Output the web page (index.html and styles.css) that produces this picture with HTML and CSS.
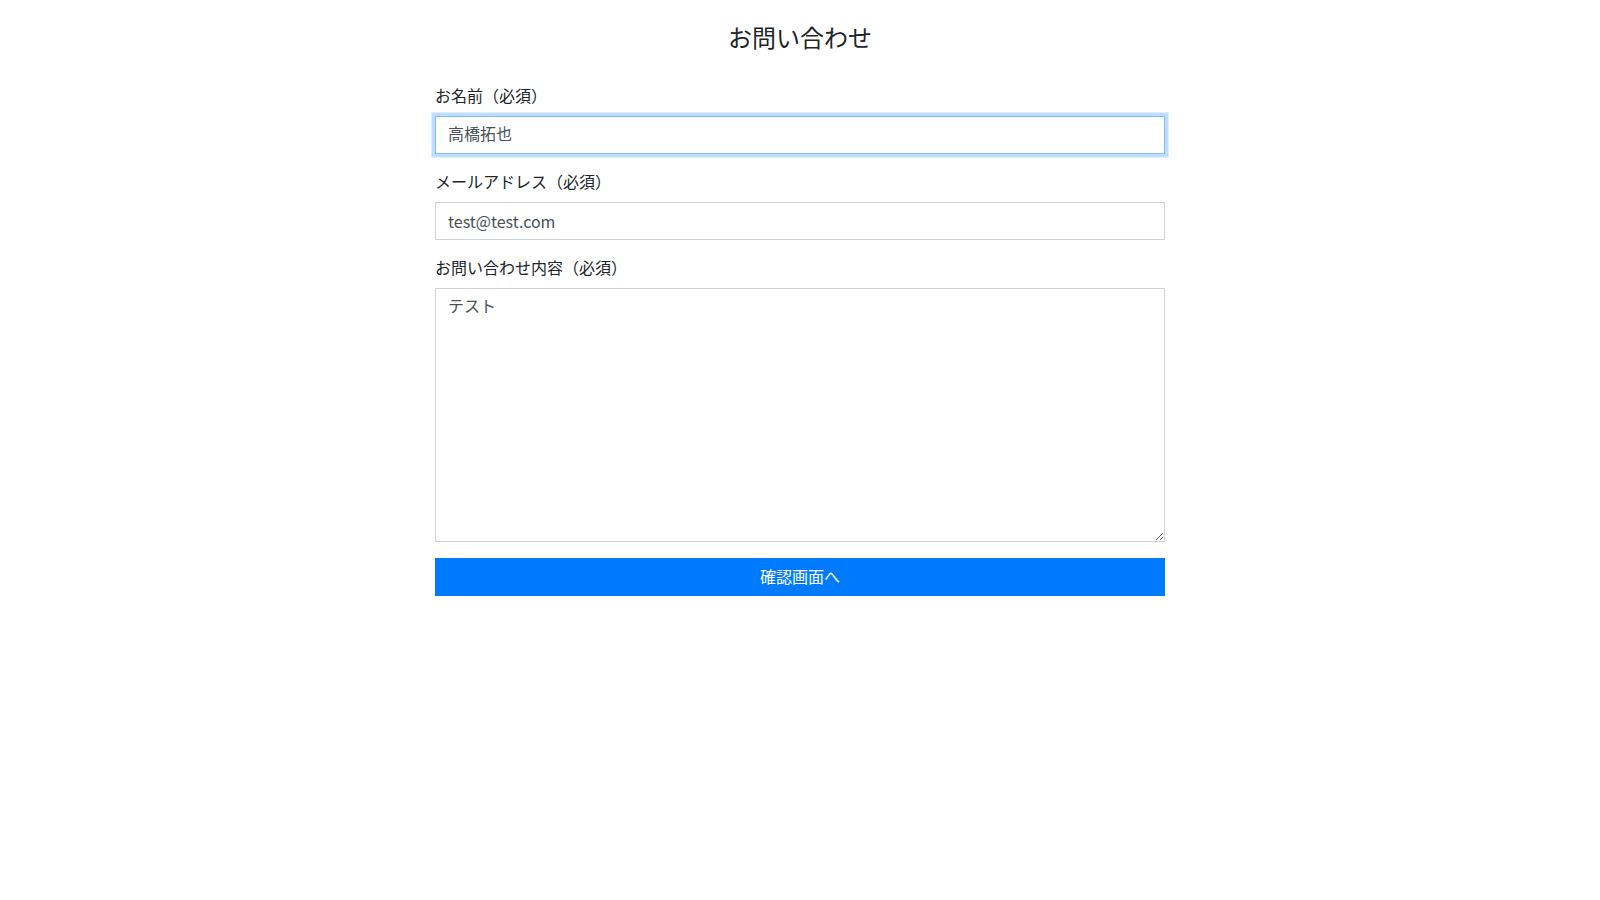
FILE: index.html
```html
<!DOCTYPE html>
<html lang="ja">
<head>
<meta charset="utf-8">
<title>お問い合わせ</title>
<link rel="stylesheet" href="styles.css">
</head>
<body>
<main class="container">
  <h1 class="title">お問い合わせ</h1>
  <form class="form">
    <div class="form-group">
      <label class="label" for="name">お名前（必須）</label>
      <input class="control focused" id="name" type="text" value="高橋拓也">
    </div>
    <div class="form-group">
      <label class="label" for="email">メールアドレス（必須）</label>
      <input class="control control-latin" id="email" type="text" value="test@test.com">
    </div>
    <div class="form-group">
      <label class="label" for="body">お問い合わせ内容（必須）</label>
      <textarea class="control textarea" id="body" rows="10">テスト</textarea>
    </div>
    <button class="submit" type="button">確認画面へ</button>
  </form>
</main>
</body>
</html>
```
FILE: styles.css
```css
* { box-sizing: border-box; }
html, body { margin: 0; padding: 0; background: #fff; }
body {
  font-family: "Noto Sans CJK JP", "Noto Sans", sans-serif;
  font-size: 16px;
  line-height: 1.5;
  color: #212529;
}
.container {
  width: 730px;
  margin: 0 auto;
  padding-top: 22px;
}
.title {
  margin: 0 0 33px;
  font-size: 24px;
  font-weight: 400;
  line-height: 29px;
  text-align: center;
}
.form { display: flex; flex-direction: column; }
.form-group { display: flex; flex-direction: column; margin-bottom: 16px; }
.label {
  display: block;
  margin-bottom: 8px;
  line-height: 22px;
  padding-bottom: 2px;
}
.control {
  display: block;
  width: 100%;
  height: 38px;
  padding: 4px 12px 8px;
  font-family: inherit;
  font-size: 16px;
  line-height: 24px;
  color: #495057;
  background: #fff;
  border: 1px solid #ced4da;
  border-radius: 0;
  outline: none;
}
.control-latin {
  padding: 6px 12px;
}
.control.focused {
  border-color: #80bdff;
  box-shadow: 0 0 0 3.5px rgba(0, 123, 255, 0.25);
}
.textarea {
  height: 254px;
  resize: vertical;
}
.submit {
  display: block;
  width: 100%;
  height: 38px;
  padding: 5px 12px 7px;
  font-family: inherit;
  font-size: 16px;
  line-height: 24px;
  color: #fff;
  background: #007bff;
  border: 1px solid #007bff;
  border-radius: 0;
}
```
